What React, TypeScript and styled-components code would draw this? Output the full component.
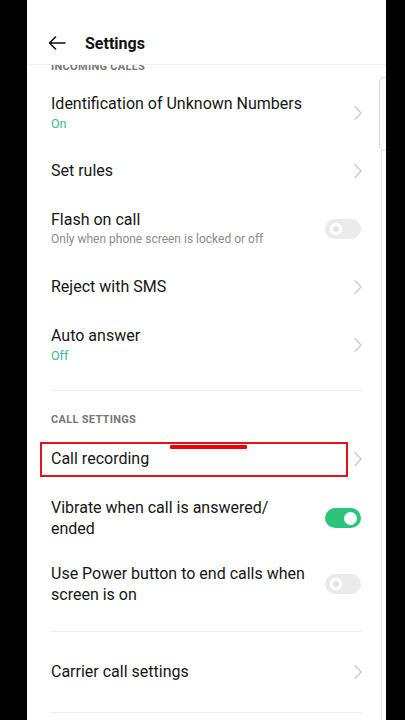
import React from 'react'
import styled, { createGlobalStyle } from 'styled-components'

const GlobalStyle = createGlobalStyle`
  html, body {
    margin: 0;
    padding: 0;
    background: #000;
  }
  body {
    font-family: Roboto, 'Noto Sans', 'Liberation Sans', sans-serif;
  }
`

const Page = styled.div`
  width: 405px;
  height: 720px;
  background: #000;
  display: flex;
  overflow: hidden;
`

const Screen = styled.div`
  position: relative;
  margin-left: 27px;
  width: 359px;
  height: 720px;
  background: #fff;
  overflow: hidden;
`

const Header = styled.div`
  position: absolute;
  top: 0;
  left: 0;
  right: 0;
  height: 65px;
  background: #fff;
  border-bottom: 1px solid #f0f0f0;
  display: flex;
  align-items: center;
  padding: 22px 0 0 21px;
  gap: 19px;
  box-sizing: border-box;
  z-index: 2;
`

const BackButton = styled.div`
  width: 18px;
  height: 18px;
  display: flex;
  align-items: center;
  justify-content: center;
`

const HeaderTitle = styled.div`
  font-size: 16px;
  font-weight: 700;
  color: #111;
`

const Content = styled.div`
  padding: 53px 24px 0 24px;
  box-sizing: border-box;
`

const SectionLabel = styled.div<{ $top?: number; $bottom?: number }>`
  font-size: 11px;
  font-weight: 700;
  color: #777;
  letter-spacing: 0.3px;
  line-height: 16px;
  text-transform: uppercase;
  padding: ${({ $top }) => $top ?? 6}px 0 ${({ $bottom }) => $bottom ?? 6}px;
`

const Row = styled.div`
  position: relative;
  min-height: 53px;
  padding: 12px 0;
  box-sizing: border-box;
  display: flex;
  align-items: center;
  gap: 12px;
`

const RowText = styled.div`
  flex: 1;
  display: flex;
  flex-direction: column;
`

const Title = styled.div`
  font-size: 16px;
  line-height: 21px;
  color: #161616;
`

const Subtitle = styled.div<{ $accent?: boolean }>`
  font-size: ${({ $accent }) => ($accent ? '12.5px' : '12px')};
  line-height: 17px;
  margin-top: 1px;
  color: ${({ $accent }) => ($accent ? '#3cb89a' : '#8c8c8c')};
`

const ChevronBox = styled.div`
  width: 8px;
  display: flex;
  align-items: center;
  justify-content: flex-end;
`

const Toggle = styled.div<{ $on?: boolean }>`
  width: 36px;
  height: 20px;
  border-radius: 10px;
  background: ${({ $on }) => ($on ? '#2cc47d' : '#ebebeb')};
  position: relative;
  flex-shrink: 0;
  margin-right: 1px;
`

const Knob = styled.div<{ $on?: boolean }>`
  position: absolute;
  top: ${({ $on }) => ($on ? 3.5 : 4)}px;
  left: ${({ $on }) => ($on ? 19 : 5)}px;
  width: ${({ $on }) => ($on ? 13 : 12)}px;
  height: ${({ $on }) => ($on ? 13 : 12)}px;
  border-radius: 50%;
  background: #fff;
  display: flex;
  align-items: center;
  justify-content: center;

  &::after {
    content: '';
    display: ${({ $on }) => ($on ? 'none' : 'block')};
    width: 6px;
    height: 6px;
    border-radius: 50%;
    background: #e3e3e3;
  }
`

const Divider = styled.div`
  height: 1px;
  background: #ececec;
  margin: 14px 0 13px;
`

const Highlight = styled.div`
  position: absolute;
  left: -11px;
  width: 308px;
  top: 10px;
  bottom: 8px;
  border: 2.5px solid #e3131b;
  box-sizing: border-box;
  pointer-events: none;
`

const Underline = styled.div`
  position: absolute;
  left: 119px;
  top: 13px;
  width: 77px;
  height: 3.5px;
  border-radius: 1px;
  background: #f00000;
`

const ScrollTrack = styled.div`
  position: absolute;
  right: 4px;
  top: 76px;
  bottom: 0;
  width: 1.5px;
  background: #e4e4e4;
  z-index: 3;
`

const ScrollThumb = styled.div`
  position: absolute;
  right: -4px;
  top: 77px;
  width: 9px;
  height: 72px;
  border: 1px solid #dcdcdc;
  border-radius: 5px;
  background: #fafafa;
  z-index: 4;
`

const Chevron = () => (
  <ChevronBox>
    <svg width="8" height="16" viewBox="0 0 8 16" fill="none">
      <path d="M1 1.5l6 6.5-6 6.5" stroke="#cacaca" strokeWidth="1.2" strokeLinecap="round" strokeLinejoin="round" />
    </svg>
  </ChevronBox>
)

type Item = {
  title: React.ReactNode
  subtitle?: string
  accent?: boolean
  toggle?: 'on' | 'off'
  highlight?: boolean
}

const incoming: Item[] = [
  { title: 'Identification of Unknown Numbers', subtitle: 'On', accent: true },
  { title: 'Set rules' },
  { title: 'Flash on call', subtitle: 'Only when phone screen is locked or off', toggle: 'off' },
  { title: 'Reject with SMS' },
  { title: 'Auto answer', subtitle: 'Off', accent: true },
]

const callSettings: Item[] = [
  { title: 'Call recording', highlight: true },
  { title: <>Vibrate when call is answered/<br />ended</>, toggle: 'on' },
  { title: <>Use Power button to end calls when<br />screen is on</>, toggle: 'off' },
]

const SettingRow = ({ item }: { item: Item }) => (
  <Row>
    <RowText>
      <Title>{item.title}</Title>
      {item.subtitle && <Subtitle $accent={item.accent}>{item.subtitle}</Subtitle>}
    </RowText>
    {item.toggle ? (
      <Toggle $on={item.toggle === 'on'}>
        <Knob $on={item.toggle === 'on'} />
      </Toggle>
    ) : (
      <Chevron />
    )}
    {item.highlight && (
      <>
        <Highlight />
        <Underline />
      </>
    )}
  </Row>
)

export default function App() {
  return (
    <Page>
      <GlobalStyle />
      <Screen>
        <Header>
          <BackButton>
            <svg width="18" height="14" viewBox="0 0 18 14" fill="none">
              <path d="M17 7H1.5M7.5 1L1.5 7l6 6" stroke="#111" strokeWidth="1.6" strokeLinecap="round" strokeLinejoin="round" />
            </svg>
          </BackButton>
          <HeaderTitle>Settings</HeaderTitle>
        </Header>
        <ScrollTrack />
        <ScrollThumb />
        <Content>
          <SectionLabel>Incoming calls</SectionLabel>
          {incoming.map((item, i) => (
            <SettingRow key={i} item={item} />
          ))}
          <Divider />
          <SectionLabel $top={8} $bottom={4}>Call settings</SectionLabel>
          {callSettings.map((item, i) => (
            <SettingRow key={i} item={item} />
          ))}
          <Divider />
          <SettingRow item={{ title: 'Carrier call settings' }} />
          <Divider />
        </Content>
      </Screen>
    </Page>
  )
}
